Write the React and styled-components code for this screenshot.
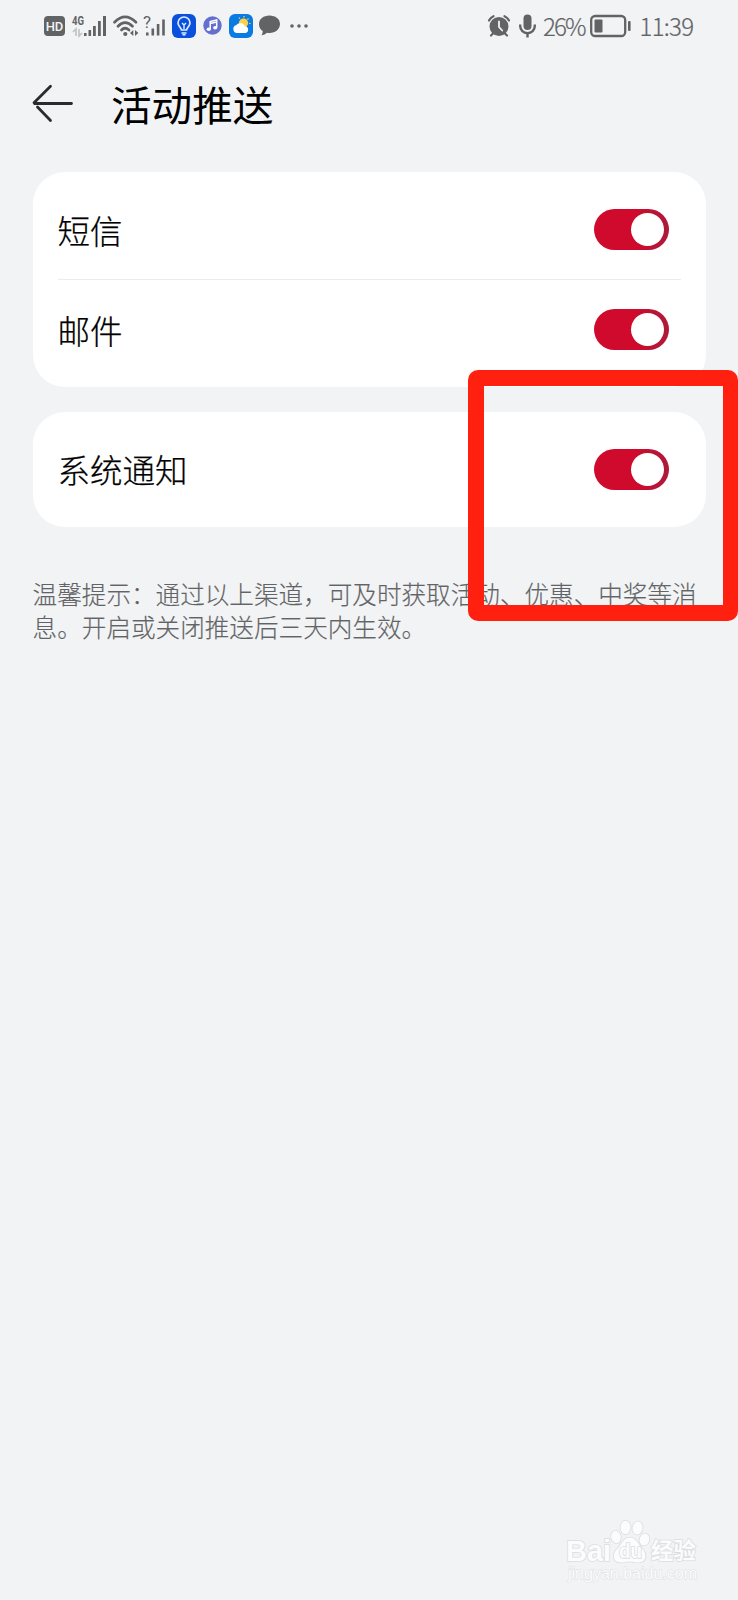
import React from 'react';
import styled, { createGlobalStyle } from 'styled-components';

const GlobalStyle = createGlobalStyle`
* {
box-sizing: border-box;
}
body {
margin: 0;
background: #f2f3f5;
font-family: 'Noto Sans CJK SC', sans-serif;
}
`
const Page = styled.div`
position: relative;
display: flex;
flex-direction: column;
width: 738px;
height: 1600px;
overflow: hidden;
background: #f2f3f5;
`
const StatusBar = styled.div`
display: flex;
align-items: center;
justify-content: space-between;
height: 51px;
padding: 0 44px 0 44px;
color: #626365;
`
const StatusGroup = styled.div`
display: flex;
align-items: center;
`
const StatusText = styled.span`
width: ${props => props.$width}px;
margin-left: ${props => props.$gap}px;
font-size: 24px;
font-weight: 300;
line-height: 30px;
letter-spacing: ${props => props.$spacing}px;
white-space: nowrap;
-webkit-text-stroke: 0.2px currentColor;
`
const Icon = styled.svg`
display: block;
flex: none;
margin-left: ${props => props.$gap || 0}px;
overflow: visible;
`
const IconText = styled.text`
font-family: ${props => props.$family || "'Roboto', sans-serif"};
font-weight: ${props => props.$weight || 700};
font-size: ${props => props.$size}px;
`
const Header = styled.header`
display: flex;
align-items: center;
height: 121px;
padding: 0 32px 15px;
`
const Title = styled.h1`
margin: 0 0 0 37px;
font-size: 40.6px;
font-weight: 400;
line-height: 60px;
color: #000000;
`
const List = styled.main`
display: flex;
flex-direction: column;
gap: 24.5px;
padding: 0 32.5px;
`
const Card = styled.section`
display: flex;
flex-direction: column;
height: ${props => props.$height}px;
padding: 7.5px 25px;
border-radius: 32px;
background: #ffffff;
`
const Row = styled.div`
display: flex;
flex: 1;
align-items: center;
justify-content: space-between;
padding-right: 11.5px;
& + & {
box-shadow: 0 -1px 0 #ececee;
}
`
const Label = styled.span`
font-size: 32.5px;
font-weight: 300;
line-height: 48px;
color: #000000;
-webkit-text-stroke: 0.25px currentColor;
`
const Track = styled.button`
display: flex;
align-items: center;
justify-content: flex-end;
width: 75px;
height: 41px;
padding: 0 5px 0 0;
border: 0;
border-radius: 21px;
background: linear-gradient(90deg, #cf0a2c 55%, #ad1a3b 100%);
`
const Knob = styled.span`
width: 33px;
height: 33px;
border-radius: 50%;
background: #ffffff;
`
const Hint = styled.p`
margin: 50px 32px 0 32.6px;
font-size: 24.6px;
font-weight: 300;
line-height: 33px;
color: #626365;
white-space: nowrap;
-webkit-text-stroke: 0.15px currentColor;
`
const Highlight = styled.div`
position: absolute;
left: 468px;
top: 370px;
width: 270px;
height: 251px;
border: 16px solid #ff2010;
border-right-width: 15px;
border-radius: 10px;
`
const Watermark = styled.div`
position: absolute;
left: 560px;
top: 1516px;
`

const Switch = () => (
    <Track type="button" role="switch" aria-checked="true">
        <Knob />
    </Track>
);

const Setting = ({ name }) => (
    <Row>
        <Label>{name}</Label>
        <Switch />
    </Row>
);

const LeftIcons = () => (
    <StatusGroup>
        <Icon width="21" height="20" viewBox="0 0 21 20">
            <rect width="21" height="20" rx="4" fill="#626365" />
            <IconText x="10.5" y="15" $size="13" $weight="500" textAnchor="middle" fill="#f2f3f5">HD</IconText>
        </Icon>
        <Icon $gap={7} width="34" height="22" viewBox="0 0 34 22" fill="#626365">
            <IconText x="0" y="10" $size="13" textLength="12" lengthAdjust="spacingAndGlyphs">4G</IconText>
            <path d="M4 21v-7l-3 3M7 14v7l3-3" fill="none" stroke="#c0c1c3" strokeWidth="1.6" />
            <path d="M12 18h2.6v3H12zM16.5 15h2.6v6h-2.6zM21 11h2.8v10H21zM26 6h2.8v15H26zM31 1h3v20h-3z" />
        </Icon>
        <Icon $gap={7} width="26" height="22" viewBox="0 0 26 22">
            <g fill="none" stroke="#626365" strokeWidth="2.7" strokeLinecap="round">
                <path d="M1.5 7.2Q12 -3.5 23 7.2" />
                <path d="M5 11.3Q12 4 19.5 11.3" />
                <path d="M8.5 15Q12 11.5 16 15" />
            </g>
            <circle cx="12.3" cy="19" r="2.1" fill="#626365" />
            <path d="M20.3 15v6l-3.3-3zM22 15v6l3.3-3z" fill="#626365" />
        </Icon>
        <Icon $gap={5} width="21" height="22" viewBox="0 0 21 22" fill="#626365">
            <IconText x="-1" y="13" $size="17" $weight="400">?</IconText>
            <path d="M2 17.5h2.6v3H2zM7.5 13.5h2.6v7H7.5zM12.8 9h2.6v11.5h-2.6zM18.2 4.5h2.6v16h-2.6z" />
        </Icon>
        <Icon $gap={6.5} width="24" height="24" viewBox="0 0 24 24">
            <rect width="24" height="24" rx="6" fill="#0b50dc" />
            <path d="M9.5 16c0-2-3.5-3.5-3.5-7a6 6 0 0 1 12 0c0 3.5-3.5 5-3.5 7z" fill="none" stroke="#dcecff" strokeWidth="1.7" />
            <path d="M12 15v-4.500M10 9l2 2 2-2M9.500 19h5M10.500 20.800h3" fill="none" stroke="#dcecff" strokeWidth="1.4" />
        </Icon>
        <Icon $gap={7} width="19" height="19" viewBox="0 0 19 19">
            <circle cx="9.5" cy="9.5" r="9.2" fill="#6370cf" />
            <path d="M7.2 13V5.5l6.5-1.5v7.5M7.2 7.5l6.5-1.5" fill="none" stroke="#ffffff" strokeWidth="1.5" />
            <ellipse cx="5.7" cy="13.2" rx="2.1" ry="1.7" fill="#ffffff" />
            <ellipse cx="12.2" cy="11.7" rx="2.1" ry="1.7" fill="#ffffff" />
        </Icon>
        <Icon $gap={7} width="24" height="24" viewBox="0 0 24 24">
            <rect width="24" height="24" rx="6" fill="#0a7be2" />
            <circle cx="14.5" cy="9" r="4.6" fill="#fbd34b" />
            <path d="M10 3.5l.8 1.3M15 2v1.6M19.5 4.5l-1.1 1.2M21.5 9.5h-1.5" stroke="#fbd34b" strokeWidth="1.2" />
            <path d="M8 19a4 4 0 0 1-.5-7.900 5 5 0 0 1 8.500 1.200 3.400 3.400 0 0 1 .5 6.700z" fill="#ffffff" />
        </Icon>
        <Icon $gap={6} width="21" height="21" viewBox="0 0 21 21" fill="#626365">
            <path d="M10.5 .5C16.5 .5 21 4 21 9s-4.500 9-10.500 9c-1 0-2-.1-2.700-.3C6.500 19 4.500 20.200 2.500 20.200c.9-1.300 1.300-2.700 1.200-4.200C1.200 14.400 0 12 0 9 0 4 4.500 .5 10.500 .5z" />
        </Icon>
        <Icon $gap={10} width="18" height="4" viewBox="0 0 18 4" fill="#626365">
            <circle cx="2" cy="2" r="1.8" />
            <circle cx="9" cy="2" r="1.8" />
            <circle cx="16" cy="2" r="1.8" />
        </Icon>
    </StatusGroup>
);

const RightIcons = () => (
    <StatusGroup>
        <Icon width="22" height="22" viewBox="0 0 22 22">
            <circle cx="11" cy="11.5" r="9.5" fill="#626365" />
            <path d="M1 5.5Q2.5 2.5 5.5 1.2M21 5.5Q19.5 2.5 16.5 1.2M5 18.5l-2 2M17 18.5l2 2" fill="none" stroke="#626365" strokeWidth="2.2" strokeLinecap="round" />
            <path d="M11 6.5v5.5l3.2 3.5" fill="none" stroke="#f2f3f5" strokeWidth="1.8" strokeLinecap="round" />
        </Icon>
        <Icon $gap={9} width="17" height="24" viewBox="0 0 17 24">
            <rect x="4.5" y="0.5" width="8" height="15.5" rx="4" fill="#626365" />
            <path d="M1.2 10.5v1.5a7.3 7.3 0 0 0 14.6 0v-1.5M8.5 19.5v4" fill="none" stroke="#626365" strokeWidth="2.4" />
        </Icon>
        <StatusText $gap={7} $width={42} $spacing={-1.8}>26%</StatusText>
        <Icon $gap={5} width="41" height="22" viewBox="0 0 41 22">
            <rect x="1.2" y="1" width="34" height="20" rx="4" fill="none" stroke="#626365" strokeWidth="2.3" />
            <rect x="4.5" y="4.5" width="8" height="13" rx="1" fill="#626365" />
            <rect x="38" y="6" width="2.6" height="10" rx="1" fill="#626365" />
        </Icon>
        <StatusText $gap={8.5} $width={54.5} $spacing={-0.7}>11:39</StatusText>
    </StatusGroup>
);

const BaiduMark = () => (
    <Watermark>
        <Icon width="145" height="70" viewBox="0 0 145 70" fill="#fbfcfd" stroke="#dcdde0" strokeWidth="1.6" paintOrder="stroke">
            <IconText x="6" y="45" $size="29" $family="'Liberation Sans', sans-serif" textLength="45" lengthAdjust="spacingAndGlyphs">Bai</IconText>
            <ellipse cx="56" cy="21" rx="4.8" ry="6.2" transform="rotate(-12 56 21)" />
            <ellipse cx="65.5" cy="11.5" rx="5" ry="6.8" />
            <ellipse cx="77.5" cy="12" rx="5" ry="6.5" transform="rotate(10 77.5 12)" />
            <ellipse cx="84.5" cy="23.5" rx="4.8" ry="6" transform="rotate(15 84.5 23.5)" />
            <path d="M70 21.5c7 0 8 7 12.5 11.5 4 4 5 13-3.5 13.5-4 .3-5-1-9-1s-6 1.300-10 1c-8-.8-7.500-9-3-13.500 5-4.500 6-11.500 13-11.500z" />
            <IconText x="59" y="42" $size="20" $family="'Liberation Sans', sans-serif" textLength="23" lengthAdjust="spacingAndGlyphs">du</IconText>
            <IconText x="91" y="43" $size="22.5" $family="'Noto Sans CJK SC', sans-serif">经验</IconText>
            <IconText x="8" y="62.5" $size="16" $weight="400" $family="'Liberation Sans', sans-serif" textLength="129" strokeWidth="0.9">jingyan.baidu.com</IconText>
        </Icon>
    </Watermark>
);

const App = () => {
    return (
        <Page lang="zh-CN">
            <GlobalStyle />
            <StatusBar>
                <LeftIcons />
                <RightIcons />
            </StatusBar>
            <Header>
                <Icon width="42" height="40" viewBox="0 0 42 40" fill="none" stroke="#2b2c2e" strokeWidth="2.8" strokeLinecap="round">
                    <path d="M39.5 19.5H2.5M18.5 2.2L2 18.7M5.5 23l13 13.5" />
                </Icon>
                <Title>活动推送</Title>
            </Header>
            <List>
                <Card $height={215}>
                    <Setting name="短信" />
                    <Setting name="邮件" />
                </Card>
                <Card $height={115}>
                    <Setting name="系统通知" />
                </Card>
            </List>
            <Hint>
                温馨提示：通过以上渠道，可及时获取活动、优惠、中奖等消
                <br />
                息。开启或关闭推送后三天内生效。
            </Hint>
            <Highlight />
            <BaiduMark />
        </Page>
    );
}

export default App;
